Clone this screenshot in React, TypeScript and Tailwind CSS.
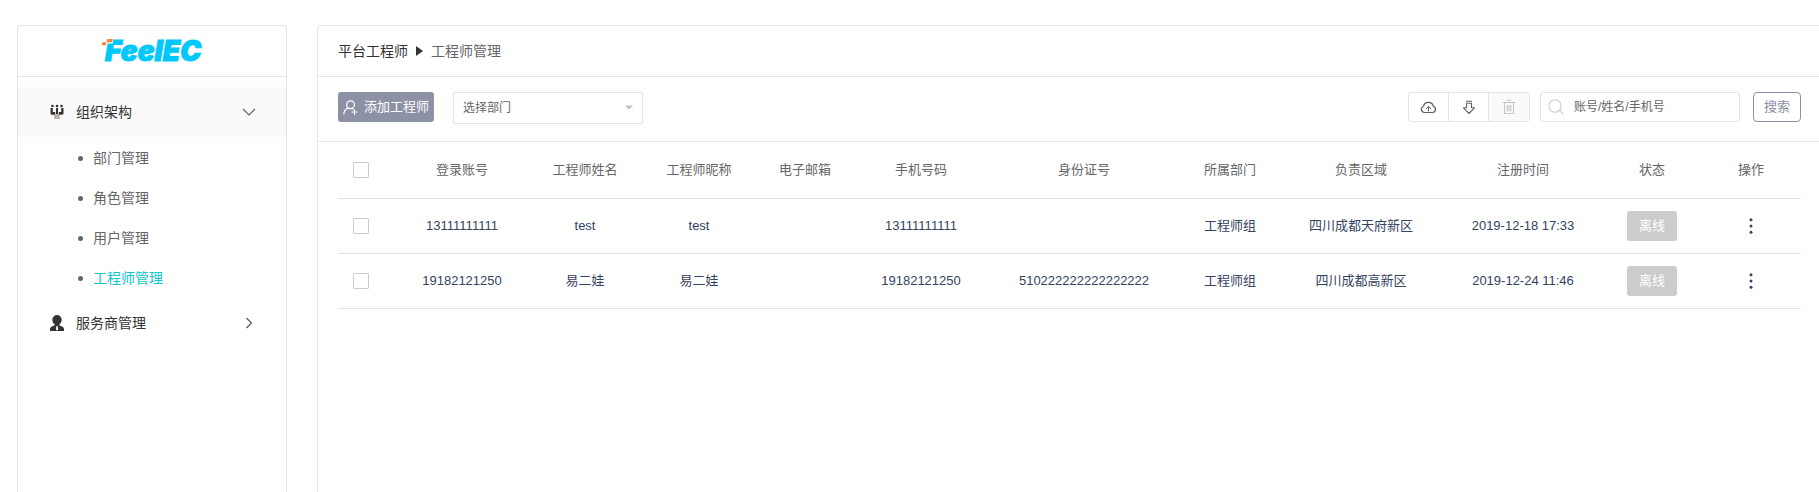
import React, { useState } from "react";

const subMenus = ["部门管理", "角色管理", "用户管理", "工程师管理"];

const columns = [
  { title: "登录账号", width: "w-[130px]" },
  { title: "工程师姓名", width: "w-[116px]" },
  { title: "工程师昵称", width: "w-[112px]" },
  { title: "电子邮箱", width: "w-[100px]" },
  { title: "手机号码", width: "w-[132px]" },
  { title: "身份证号", width: "w-[194px]" },
  { title: "所属部门", width: "w-[98px]" },
  { title: "负责区域", width: "w-[164px]" },
  { title: "注册时间", width: "w-[160px]" },
  { title: "状态", width: "w-[98px]" },
  { title: "操作", width: "w-[100px]" },
];

const engineers = [
  {
    account: "13111111111",
    name: "test",
    nickname: "test",
    email: "",
    phone: "13111111111",
    idCard: "",
    department: "工程师组",
    area: "四川成都天府新区",
    createdAt: "2019-12-18 17:33",
  },
  {
    account: "19182121250",
    name: "易二娃",
    nickname: "易二娃",
    email: "",
    phone: "19182121250",
    idCard: "510222222222222222",
    department: "工程师组",
    area: "四川成都高新区",
    createdAt: "2019-12-24 11:46",
  },
];

function Logo() {
  return (
    <svg width="110" height="36" viewBox="0 0 110 36" role="img" aria-label="FeelEC">
      <text
        x="8"
        y="28"
        fill="#00c8fa"
        stroke="#00c8fa"
        strokeWidth="1"
        className="font-['Inter',sans-serif] text-[28px] font-black italic"
      >
        FeelEC
      </text>
      <path d="M9 5h8l-1.500 5.500H9z" fill="#fff" />
      <path d="M10.500 6h5.500l-1 3.300H9.500z M5.500 9.300h4l-.9 3H4.600z" fill="#ff8330" />
    </svg>
  );
}

function TeamIcon() {
  return (
    <svg width="14" height="16" viewBox="0 0 14 16" fill="#333">
      <circle cx="2.500" cy="2" r="1.300" />
      <circle cx="7" cy="2" r="1.300" />
      <circle cx="11.500" cy="2" r="1.300" />
      <path d="M.5 4h2.300v4h2.400v2.800H1.500L.5 9.800z" />
      <path d="M13.500 4h-2.300v4H8.800v2.800h3.700l1-1z" />
      <path d="M6 4h2v6H6z" />
      <path d="M4.500 10h1.200v5H4.500z M6.400 10h1.200v5H6.400z M8.300 10h1.200v5H8.300z" fill="#a08a78" />
    </svg>
  );
}

function PersonIcon() {
  return (
    <svg width="14" height="16" viewBox="0 0 14 16" fill="#333">
      <path d="M7 0a4.700 4.700 0 0 1 4.700 4.700c0 2-.9 3.700-2.300 4.600v1l3.600 1.700c.7.500 1 1.200 1 2.200V16H0v-1.800c0-1 .3-1.700 1-2.200l3.600-1.700v-1C3.200 8.400 2.300 6.700 2.300 4.700A4.700 4.700 0 0 1 7 0z" />
      <path d="M6.400 11h1.200l.5 3.500-1.100 1-1.100-1z" fill="#fff" />
    </svg>
  );
}

function AddUserIcon() {
  return (
    <svg width="15" height="15" viewBox="0 0 15 15" fill="none" stroke="#fff" strokeWidth="1.200" strokeLinecap="round">
      <circle cx="7.500" cy="4.700" r="3.900" />
      <path d="M5.200 8C2.800 9 1 11.200.8 14M8.800 8.500l1 .6M11.500 9.500v5M9 12h5" />
    </svg>
  );
}

function CloudIcon() {
  return (
    <svg width="17" height="13" viewBox="0 0 17 13" fill="none" stroke="#606266" strokeWidth="1.200" strokeLinecap="round" strokeLinejoin="round">
      <path d="M4.200 11.500a3.200 3.200 0 0 1-.7-6.200 5 5 0 0 1 9.800 0 3.200 3.200 0 0 1-.6 6.200z" />
      <path d="M8.500 10V5.800M6.200 7.700l2.300-2.100 2.300 2.100" strokeWidth="1" />
    </svg>
  );
}

function DownIcon() {
  return (
    <svg width="14" height="15" viewBox="0 0 14 15" fill="none" stroke="#606266" strokeWidth="1.100" strokeLinejoin="round">
      <path d="M4.500 3.500v4.300H1.500L7 13.500l5.500-5.700h-3V3.500M4 1.200h6M4 3.300h6" />
    </svg>
  );
}

function TrashIcon() {
  return (
    <svg width="14" height="16" viewBox="0 0 14 16" fill="none" stroke="#c4c6ca" strokeWidth="1.100">
      <path d="M.5 3.500h13M4.500 1.200h5M2.500 3.500v11h9v-11M5.200 6v6.500M7 6v6.500M8.800 6v6.500" />
    </svg>
  );
}

function SearchIcon() {
  return (
    <svg width="16" height="16" viewBox="0 0 16 16" fill="none" stroke="#c8cad0" strokeWidth="1.100" strokeLinecap="round">
      <circle cx="7" cy="7" r="6.200" />
      <path d="M11.600 11.600l3.600 3.600" />
    </svg>
  );
}

function Checkbox({ label }: { label: string }) {
  return (
    <input
      type="checkbox"
      aria-label={label}
      className="block h-4 w-4 appearance-none rounded-[1px] border border-[#ccc] bg-white checked:bg-[#8d91a6]"
    />
  );
}

function Sidebar() {
  const [open, setOpen] = useState(true);

  return (
    <aside className="w-[270px] shrink-0 rounded-t border border-b-0 border-[#e1e6eb]">
      <div className="flex h-[51px] items-center justify-center border-b border-[#e1e6eb]">
        <Logo />
      </div>
      <nav className="pt-2.5 text-sm text-[#333]">
        <button
          onClick={() => setOpen(!open)}
          aria-expanded={open}
          className="flex h-[50px] w-full items-center bg-[#fafafa] pr-[30px] pl-8"
        >
          <TeamIcon />
          <span className="ml-3">组织架构</span>
          <svg className="ml-auto" width="14" height="14" viewBox="0 0 14 14" fill="none" stroke="#666" strokeWidth="1.200">
            <path d="M1 4l6 6 6-6" />
          </svg>
        </button>
        {open && (
          <ul className="pt-px">
            {subMenus.map((item) => (
              <li key={item} className="flex h-10 items-center pl-[60px]">
                <span className="h-[5px] w-[5px] rounded-full bg-[#666]" />
                <a href="#" className={item === "工程师管理" ? "ml-2.5 text-[#13c5cd]" : "ml-2.5 text-[#666]"}>
                  {item}
                </a>
              </li>
            ))}
          </ul>
        )}
        <button className="flex h-[50px] w-full items-center pr-[30px] pl-8">
          <PersonIcon />
          <span className="ml-3">服务商管理</span>
          <svg className="ml-auto" width="14" height="14" viewBox="0 0 14 14" fill="none" stroke="#555" strokeWidth="1.200">
            <path d="M4.500 2l5 5-5 5" />
          </svg>
        </button>
      </nav>
    </aside>
  );
}

function Toolbar() {
  return (
    <div className="flex items-start border-b border-[#e1e6eb] pt-[15px] pr-[18px] pb-[17px] pl-5">
      <button className="flex h-[30px] items-center rounded-[3px] bg-[#8d91a6] px-[5px] text-[13px] text-white">
        <AddUserIcon />
        <span className="ml-1.5">添加工程师</span>
      </button>

      <div className="relative ml-[19px]">
        <select
          aria-label="选择部门"
          className="block h-8 w-[190px] appearance-none rounded-[2px] border border-[#e1e6eb] bg-white px-[9px] text-xs text-[#666]"
        >
          <option>选择部门</option>
          <option>工程师组</option>
        </select>
        <svg className="pointer-events-none absolute top-3 right-2.5" width="8" height="7" viewBox="0 0 8 7" fill="#c0c0c0">
          <path d="M0 1.500h8L4 5.500z" />
        </svg>
      </div>

      <div className="ml-auto flex h-[30px] divide-x divide-[#e1e6eb] overflow-hidden rounded-[3px] border border-[#e1e6eb]">
        <button aria-label="上传" className="flex w-10 items-center justify-center">
          <CloudIcon />
        </button>
        <button aria-label="下载" className="flex w-10 items-center justify-center">
          <DownIcon />
        </button>
        <button aria-label="删除" disabled className="flex w-10 items-center justify-center bg-[#fafafa]">
          <TrashIcon />
        </button>
      </div>

      <label className="ml-2.5 flex h-[30px] w-[200px] items-center rounded-[3px] border border-[#e1e6eb] pl-[7px]">
        <SearchIcon />
        <input
          type="text"
          aria-label="账号/姓名/手机号"
          placeholder="账号/姓名/手机号"
          className="ml-2.5 min-w-0 flex-1 text-xs text-[#333] outline-none placeholder:text-[#666]"
        />
      </label>

      <button className="ml-[13px] h-[30px] w-12 rounded border border-[#8d91a6] text-[13px] text-[#8d91a6]">搜索</button>
    </div>
  );
}

function EngineerTable() {
  return (
    <div className="pr-[18px] pl-5">
      <table className="w-full table-fixed text-center text-[13px] text-[#34435e]">
        <thead>
          <tr className="h-14 border-b border-[#e4e4e4] text-[#666]">
            <th className="w-[59px] pl-[15px]">
              <Checkbox label="全选" />
            </th>
            {columns.map((col) => (
              <th key={col.title} className={`${col.width} font-normal`}>
                {col.title}
              </th>
            ))}
          </tr>
        </thead>
        <tbody>
          {engineers.map((row) => (
            <tr key={row.account} className="h-[55px] border-b border-[#e4e4e4]">
              <td className="pl-[15px]">
                <Checkbox label={row.account} />
              </td>
              <td>{row.account}</td>
              <td>{row.name}</td>
              <td>{row.nickname}</td>
              <td>{row.email}</td>
              <td>{row.phone}</td>
              <td>{row.idCard}</td>
              <td>{row.department}</td>
              <td>{row.area}</td>
              <td>{row.createdAt}</td>
              <td>
                <button className="h-[30px] rounded-[3px] bg-[#ccc] px-3 align-middle text-white">离线</button>
              </td>
              <td>
                <button aria-label="更多操作" className="align-middle">
                  <svg width="16" height="16" viewBox="0 0 16 16" fill="#34435e">
                    <circle cx="8" cy="1.700" r="1.500" />
                    <circle cx="8" cy="8" r="1.500" />
                    <circle cx="8" cy="14.300" r="1.500" />
                  </svg>
                </button>
              </td>
            </tr>
          ))}
        </tbody>
      </table>
    </div>
  );
}

export default function App() {
  return (
    <div className="flex min-h-screen bg-white pt-[25px] pl-[17px] font-['Liberation_Sans','Noto_Sans_CJK_SC',sans-serif]">
      <Sidebar />
      <main className="ml-[30px] min-w-0 flex-1 rounded-tl border-t border-l border-[#e1e6eb]">
        <div className="flex h-[51px] items-center border-b border-[#e1e6eb] pl-5 text-sm text-[#333]">
          <a href="#">平台工程师</a>
          <svg className="mx-2" width="7" height="10" viewBox="0 0 7 10" fill="#333">
            <path d="M0 0l7 5-7 5z" />
          </svg>
          <span className="text-[#666]">工程师管理</span>
        </div>
        <Toolbar />
        <EngineerTable />
      </main>
    </div>
  );
}
